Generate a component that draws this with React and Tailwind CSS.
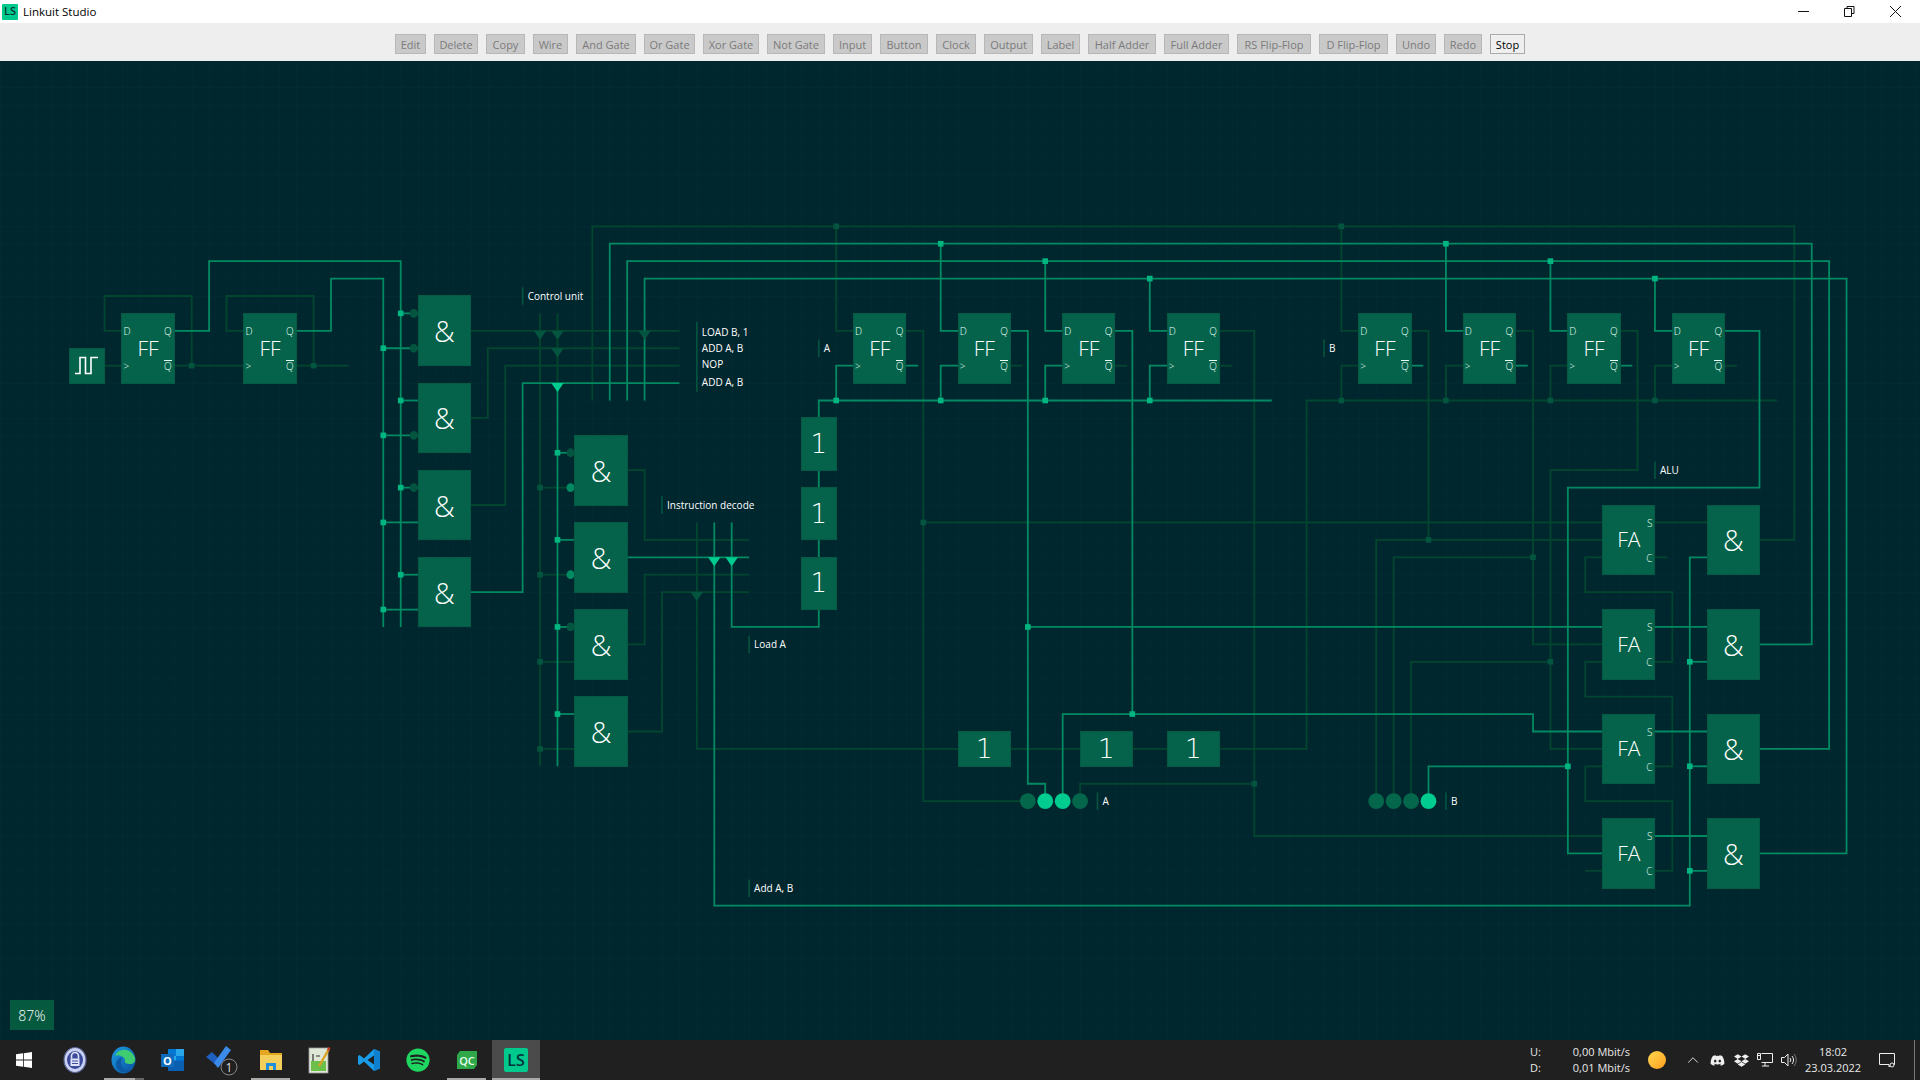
import React from 'react'
import { ChevronUp } from 'lucide-react'
import { FaDiscord, FaDropbox, FaSpotify } from 'react-icons/fa'

// the circuit sits on a 17.42px grid (20 units at 87% zoom), canvas starts at y=61
const U = 17.42
const X = j => 0.04 + U * j
const Y = k => -0.16 + U * k - 61

const ON = '#028a62'
const OFF = '#03462f'
const NODE_DIM = '#04553f'
const BRIGHT = '#00cc8f'

const dimWires = [
  [[6, 21], [7, 21]],
  [[10, 21], [14, 21]],
  [[7, 19], [6, 19], [6, 17], [11, 17], [11, 21]],
  [[14, 19], [13, 19], [13, 17], [18, 17], [18, 21]],
  [[17, 21], [20, 21]],
  [[27, 19], [39, 19]],
  [[27, 24], [28, 24], [28, 20], [39, 20]],
  [[27, 29], [29, 29], [29, 21], [39, 21]],
  [[31, 18], [31, 44]],
  [[32, 18], [32, 22]],
  [[34, 23], [34, 13], [103, 13], [103, 31], [101, 31]],
  [[36, 27], [37, 27], [37, 31], [43, 31]],
  [[36, 37], [37, 37], [37, 33], [43, 33]],
  [[36, 42], [38, 42], [38, 34], [43, 34]],
  [[40, 30], [40, 43], [55, 43]],
  [[58, 43], [62, 43]],
  [[65, 43], [67, 43]],
  [[70, 43], [75, 43], [75, 23], [102, 23]],
  [[31, 28], [33, 28]],
  [[31, 33], [33, 33]],
  [[31, 38], [33, 38]],
  [[31, 43], [33, 43]],
  [[48, 13], [48, 19], [49, 19]],
  [[77, 13], [77, 19], [78, 19]],
  [[77, 23], [77, 21], [78, 21]],
  [[83, 23], [83, 21], [84, 21]],
  [[89, 23], [89, 21], [90, 21]],
  [[95, 23], [95, 21], [96, 21]],
  [[52, 19], [53, 19], [53, 46], [59, 46]],
  [[53, 30], [92, 30]],
  [[70, 19], [72, 19], [72, 48], [92, 48]],
  [[72, 45], [62, 45], [62, 46]],
  [[81, 19], [82, 19], [82, 31]],
  [[79, 46], [79, 31], [92, 31]],
  [[87, 19], [88, 19], [88, 37], [92, 37]],
  [[80, 46], [80, 32], [88, 32]],
  [[93, 19], [94, 19], [94, 27], [89, 27], [89, 43], [92, 43]],
  [[81, 46], [81, 38], [89, 38]],
  [[95, 30], [98, 30]],
  [[95, 50], [96, 50], [96, 46], [91, 46], [91, 44], [92, 44]],
  [[95, 44], [96, 44], [96, 40], [91, 40], [91, 38], [92, 38]],
  [[95, 38], [96, 38], [96, 34], [91, 34], [91, 32], [92, 32]],
  [[95, 32], [95.7, 32]],
  [[91, 50], [92, 50]],
  [[58, 21], [58.7, 21]],
  [[64, 21], [64.7, 21]],
  [[99, 21], [99.7, 21]],
  [[70, 21], [70.7, 21]],
]

const onWires = [
  [[10, 19], [12, 19], [12, 15], [23, 15], [23, 36]],
  [[17, 19], [19, 19], [19, 16], [22, 16], [22, 36]],
  [[23, 18], [24, 18]],
  [[22, 20], [24, 20]],
  [[23, 23], [24, 23]],
  [[22, 25], [24, 25]],
  [[23, 28], [24, 28]],
  [[22, 30], [24, 30]],
  [[23, 33], [24, 33]],
  [[22, 35], [24, 35]],
  [[27, 34], [30, 34], [30, 22], [39, 22]],
  [[32, 22], [32, 44]],
  [[32, 26], [33, 26]],
  [[32, 31], [33, 31]],
  [[32, 36], [33, 36]],
  [[32, 41], [33, 41]],
  [[36, 32], [43, 32]],
  [[35, 23], [35, 14], [104, 14], [104, 37], [101, 37]],
  [[36, 23], [36, 15], [105, 15], [105, 43], [101, 43]],
  [[37, 23], [37, 16], [106, 16], [106, 49], [101, 49]],
  [[41, 30], [41, 52], [97, 52], [97, 32], [98, 32]],
  [[42, 30], [42, 36], [47, 36], [47, 35]],
  [[47, 32], [47, 31]],
  [[47, 28], [47, 27]],
  [[47, 24], [47, 23], [73, 23]],
  [[48, 23], [48, 21], [49, 21]],
  [[54, 23], [54, 21], [55, 21]],
  [[60, 23], [60, 21], [61, 21]],
  [[66, 23], [66, 21], [67, 21]],
  [[54, 14], [54, 19], [55, 19]],
  [[60, 15], [60, 19], [61, 19]],
  [[66, 16], [66, 19], [67, 19]],
  [[83, 14], [83, 19], [84, 19]],
  [[89, 15], [89, 19], [90, 19]],
  [[95, 16], [95, 19], [96, 19]],
  [[58, 19], [59, 19], [59, 45], [60, 45], [60, 46]],
  [[59, 36], [92, 36]],
  [[64, 19], [65, 19], [65, 41]],
  [[61, 46], [61, 41], [88, 41], [88, 42], [92, 42]],
  [[99, 19], [101, 19], [101, 28], [90, 28], [90, 49], [92, 49]],
  [[90, 44], [82, 44], [82, 46]],
  [[95, 36], [98, 36]],
  [[95, 42], [98, 42]],
  [[95, 48], [98, 48]],
  [[97, 38], [98, 38]],
  [[97, 44], [98, 44]],
  [[97, 50], [98, 50]],
  [[52, 21], [52.7, 21]],
  [[81, 21], [81.7, 21]],
  [[87, 21], [87.7, 21]],
  [[93, 21], [93.7, 21]],
]

const onDots = [[23, 18], [22, 20], [23, 23], [22, 25], [23, 28], [22, 30], [23, 33], [22, 35], [32, 26], [32, 31], [32, 36], [32, 41], [54, 14], [60, 15], [66, 16], [83, 14], [89, 15], [95, 16], [48, 23], [54, 23], [60, 23], [66, 23], [59, 36], [65, 41], [90, 44], [97, 38], [97, 44], [97, 50]]
const offDots = [[11, 21], [18, 21], [31, 28], [31, 33], [31, 38], [31, 43], [48, 13], [77, 13], [53, 30], [72, 45], [82, 31], [88, 32], [89, 38], [77, 23], [83, 23], [89, 23], [95, 23]]

const offTriangles = [[31, 19], [32, 19], [32, 20], [37, 19], [40, 34]]
const onTriangles = [[32, 22], [41, 32], [42, 32]]

const bubbles = [
  [23.75, 18, NODE_DIM], [23.75, 20, NODE_DIM], [23.75, 25, NODE_DIM], [23.75, 28, NODE_DIM],
  [32.75, 26, NODE_DIM], [32.75, 36, NODE_DIM], [32.75, 28, ON], [32.75, 33, ON],
]

const leds = [[59, 0], [60, 1], [61, 1], [62, 0], [79, 0], [80, 0], [81, 0], [82, 1]]

const flipFlops = [[7], [14], [49], [55], [61], [67], [78], [84], [90], [96]]
const ands = [[24, 17], [24, 22], [24, 27], [24, 32], [33, 25], [33, 30], [33, 35], [33, 40], [98, 29], [98, 35], [98, 41], [98, 47]]
const adders = [29, 35, 41, 47]
const inverters = [[46, 24, 3], [46, 28, 3], [46, 32, 3], [55, 42, 2], [62, 42, 2], [67, 42, 2]]
const labels = [
  [30, 17, 1, 'Control unit'],
  [47, 20, 1, 'A'],
  [76, 20, 1, 'B'],
  [38, 29, 1, 'Instruction decode'],
  [43, 37, 1, 'Load A'],
  [43, 51, 1, 'Add A, B'],
  [63, 46, 1, 'A'],
  [83, 46, 1, 'B'],
  [95, 27, 1, 'ALU'],
]

const tools = [
  ['Edit', 'w-[31px]'], ['Delete', 'w-[44px]'], ['Copy', 'w-[39px]'], ['Wire', 'w-[35px]'],
  ['And Gate', 'w-[60px]'], ['Or Gate', 'w-[51px]'], ['Xor Gate', 'w-[56px]'], ['Not Gate', 'w-[58px]'],
  ['Input', 'w-[39px]'], ['Button', 'w-[48px]'], ['Clock', 'w-[40px]'], ['Output', 'w-[49px]'],
  ['Label', 'w-[39px]'], ['Half Adder', 'w-[68px]'], ['Full Adder', 'w-[65px]'], ['RS Flip-Flop', 'w-[74px]'],
  ['D Flip-Flop', 'w-[69px]'], ['Undo', 'w-[40px]'], ['Redo', 'w-[38px]'],
]

const pathOf = pts => pts.map((p, i) => `${i ? 'L' : 'M'}${X(p[0])} ${Y(p[1])}`).join(' ')

function Wiring() {
  return (
    <svg className="absolute inset-0 h-full w-full" xmlns="http://www.w3.org/2000/svg">
      <defs>
        <pattern id="grid" x={X(0)} y={Y(0)} width={U} height={U} patternUnits="userSpaceOnUse">
          <path d={`M${U} 0H0V${U}`} fill="none" stroke="#032d36" strokeWidth="1" />
        </pattern>
      </defs>
      <rect width="100%" height="100%" fill="url(#grid)" />
      {dimWires.map((w, i) => <path key={i} d={pathOf(w)} fill="none" stroke={OFF} strokeWidth="1.8" />)}
      {onWires.map((w, i) => <path key={i} d={pathOf(w)} fill="none" stroke={ON} strokeWidth="1.8" />)}
      {offDots.map(([j, k], i) => <rect key={i} x={X(j) - 2.8} y={Y(k) - 2.8} width="5.6" height="5.6" fill={NODE_DIM} />)}
      {onDots.map(([j, k], i) => <rect key={i} x={X(j) - 2.8} y={Y(k) - 2.8} width="5.6" height="5.6" fill="#00b680" />)}
      {offTriangles.map(([j, k], i) => <path key={i} d={`M${X(j) - 6.2} ${Y(k)}h12.4l-6.2 9z`} fill={NODE_DIM} />)}
      {onTriangles.map(([j, k], i) => <path key={i} d={`M${X(j) - 6.2} ${Y(k)}h12.4l-6.2 9z`} fill={BRIGHT} />)}
      {bubbles.map(([j, k, c], i) => <ellipse key={i} cx={X(j)} cy={Y(k)} rx="4" ry="4.4" fill={c} />)}
      {leds.map(([j, lit], i) => <circle key={i} cx={X(j)} cy={Y(46)} r="7.9" fill={lit ? BRIGHT : '#04664a'} />)}
      {/* label ticks */}
      {labels.map(([j, k, h], i) => <path key={i} d={`M${X(j)} ${Y(k) - 8.7}v${U * h}`} stroke={NODE_DIM} strokeWidth="1.6" />)}
      <path d={`M${X(40)} ${Y(18.5)}v${U * 4}`} stroke={NODE_DIM} strokeWidth="1.6" />
    </svg>
  )
}

function Block({ j, k, w, h, children }) {
  return (
    <div
      className="absolute flex items-center justify-center border border-[#045a43] bg-[#04634a] font-light text-white"
      style={{ left: X(j) - 0.5, top: Y(k) - 0.5, width: U * w + 1, height: U * h + 1 }}
    >
      {children}
    </div>
  )
}

function Pin({ row, right, children, className = '' }) {
  return (
    <span
      className={`absolute text-[10px] leading-none text-[#e8fff6] ${right ? 'right-[2px]' : 'left-[1px]'} ${className}`}
      style={{ top: U * row - 5 }}
    >
      {children}
    </span>
  )
}

function FlipFlop({ j }) {
  return (
    <Block j={j} k={18} w={3} h={4}>
      <span className="text-[21px] leading-none">FF</span>
      <Pin row={1}>D</Pin>
      <Pin row={1} right>Q</Pin>
      <Pin row={3}>&gt;</Pin>
      <Pin row={3} right className="-translate-y-px border-t border-[#e8fff6]">Q</Pin>
    </Block>
  )
}

function Adder({ k }) {
  return (
    <Block j={92} k={k} w={3} h={4}>
      <span className="text-[21px] leading-none">FA</span>
      <Pin row={1} right>S</Pin>
      <Pin row={3} right>C</Pin>
    </Block>
  )
}

function Tag({ j, k, children }) {
  return (
    <span
      className="absolute whitespace-nowrap text-[10px] leading-none text-white"
      style={{ left: X(j) + 5, top: Y(k) - 5 }}
    >
      {children}
    </span>
  )
}

function Canvas() {
  return (
    <main className="relative flex-1 overflow-hidden bg-[#00262e]">
      <Wiring />
      <Block j={4} k={20} w={2} h={2}>
        <svg width="26" height="20" viewBox="0 0 26 20" fill="none" stroke="#fff" strokeWidth="1.6">
          <path d="M1 17.5H6V1.5H11.5V17.5H17V1.5H24" />
        </svg>
      </Block>
      {flipFlops.map(([j]) => <FlipFlop key={j} j={j} />)}
      {ands.map(([j, k]) => (
        <Block key={`${j}-${k}`} j={j} k={k} w={3} h={4}>
          <span className="text-[29px] leading-none">&amp;</span>
        </Block>
      ))}
      {adders.map(k => <Adder key={k} k={k} />)}
      {inverters.map(([j, k, h]) => (
        <Block key={`${j}-${k}`} j={j} k={k} w={j === 46 ? 2 : 3} h={h}>
          <span className="font-['DejaVu_Sans',sans-serif] text-[26px] font-extralight leading-none">1</span>
        </Block>
      ))}
      {labels.map(([j, k, , text], i) => <Tag key={i} j={j} k={k}>{text}</Tag>)}
      <Tag j={40} k={19.05}>LOAD B, 1</Tag>
      <Tag j={40} k={19.98}>ADD A, B</Tag>
      <Tag j={40} k={20.93}>NOP</Tag>
      <Tag j={40} k={21.93}>ADD A, B</Tag>
      <div className="absolute bottom-[10px] left-[10px] flex h-[30px] w-[44px] items-center justify-center bg-[#05593f] text-[14px] font-light text-white">
        87%
      </div>
    </main>
  )
}

function TitleBar() {
  return (
    <header className="flex h-[23px] items-center bg-white">
      <div className="ml-[2px] flex h-[16px] w-[16px] items-center justify-center rounded-[1px] bg-[#00c98d] text-[11px] font-semibold text-[#033]">
        LS
      </div>
      <span className="ml-[5px] text-[11.5px] text-black">Linkuit Studio</span>
      <div className="ml-auto flex pr-[2px]">
        <div className="flex h-[20px] w-[45px] items-center justify-center">
          <svg width="11" height="11" viewBox="0 0 11 11" stroke="#111"><path d="M0 5.5H11" /></svg>
        </div>
        <div className="flex h-[20px] w-[46px] items-center justify-center">
          <svg width="11" height="11" viewBox="0 0 11 11" fill="none" stroke="#111"><path d="M.5 2.5h7v8h-7zM3 2.5V.5h7v7H7.5" /></svg>
        </div>
        <div className="flex h-[20px] w-[46px] items-center justify-center">
          <svg width="11" height="11" viewBox="0 0 11 11" stroke="#111"><path d="M0 0L11 11M11 0L0 11" /></svg>
        </div>
      </div>
    </header>
  )
}

function Toolbar() {
  return (
    <nav className="flex h-[38px] items-start justify-center gap-2 bg-[#eeeeee] pt-[11px]">
      {tools.map(([name, width]) => (
        <button key={name} className={`h-[20px] border border-[#b7b7b7] bg-[#c9c9c9] text-center text-[11px] leading-none text-[#7b7b7b] ${width}`}>
          {name}
        </button>
      ))}
      <button className="h-[20px] w-[35px] border border-[#ababab] bg-[#efefef] text-center text-[11px] leading-none text-black">Stop</button>
    </nav>
  )
}

function Slot({ line, children }) {
  return (
    <div className="relative flex h-full w-[49px] items-center justify-center">
      {children}
      {line}
    </div>
  )
}

function Taskbar() {
  const underline = <span className="absolute bottom-0 left-[5px] right-[5px] h-[2px] bg-[#a9a9a9]" />
  return (
    <footer className="flex h-[40px] items-center bg-[#202020] text-white">
      <div className="mr-[2px] flex h-full w-[48px] items-center justify-center">
        <svg width="16" height="16" viewBox="0 0 16 16" fill="#fff">
          <path d="M0 2.3L7 1.3V7.6H0zM7.8 1.2L16 0V7.6H7.8zM0 8.4H7V14.7L0 13.7zM7.8 8.4H16V16L7.8 14.8z" />
        </svg>
      </div>
      <Slot>
        <svg width="24" height="26" viewBox="0 0 24 26">
          <ellipse cx="12" cy="13" rx="11" ry="12.5" fill="#c9d2f2" stroke="#59628f" strokeWidth="1.2" />
          <ellipse cx="12" cy="13" rx="8" ry="9" fill="#3d4a9c" />
          <path d="M8.5 11.5V9a3.5 3.5 0 0 1 7 0v2.5" fill="none" stroke="#dfe4fa" strokeWidth="1.6" />
          <rect x="7.5" y="11.5" width="9" height="7.5" fill="#dfe4fa" />
          <path d="M9 14h6M9 16.5h6" stroke="#3d4a9c" strokeWidth="1" />
        </svg>
      </Slot>
      <Slot line={
        <>
          <span className="absolute bottom-0 left-[5px] h-[2px] w-[31px] bg-[#a9a9a9]" />
          <span className="absolute bottom-0 left-[36px] h-[2px] w-[9px] bg-[#666]" />
        </>
      }>
        <svg width="25" height="28" viewBox="0 0 25 28">
          <defs>
            <linearGradient id="edgeG" x1="0" y1="0" x2="1" y2="1">
              <stop offset="0" stopColor="#1b9de2" />
              <stop offset="1" stopColor="#0b4f9e" />
            </linearGradient>
          </defs>
          <ellipse cx="12.5" cy="14" rx="12" ry="13.5" fill="url(#edgeG)" />
          <path d="M4 10C7 2 20 1 24 12c1 4-2 6-5 6-3.5 0-6-1-5-3 1-4-7-7-10-5z" fill="#3ecb72" />
          <path d="M10 17c0 5 5 8 10 7-5 5-15 2-15-6 0-3 3-7 7-7-2 1-2 4-2 6z" fill="#0c59a4" />
        </svg>
      </Slot>
      <Slot>
        <svg width="24" height="24" viewBox="0 0 24 24">
          <rect x="7" y="1" width="16" height="22" fill="#28a8ea" />
          <rect x="7" y="1" width="8" height="7" fill="#0078d4" />
          <rect x="15" y="8" width="8" height="7" fill="#0078d4" />
          <path d="M7 12L23 13V23H7z" fill="#0a5fb0" />
          <rect x="0" y="6" width="13" height="13" fill="#0f6cbd" />
          <text x="6.5" y="16.5" textAnchor="middle" fontSize="11" fontWeight="700" fill="#fff">O</text>
        </svg>
      </Slot>
      <Slot>
        <svg width="34" height="32" viewBox="0 0 34 32">
          <path d="M1 13L7 8L14 15L11 21z" fill="#1f5fbf" />
          <path d="M9 19L21 2L26 6L13 24z" fill="#3a8bea" />
          <circle cx="24" cy="23" r="8" fill="#202020" stroke="#888" strokeWidth="1" />
          <text x="24" y="27.5" textAnchor="middle" fontSize="12" fill="#ddd">1</text>
        </svg>
      </Slot>
      <Slot line={underline}>
        <svg width="22" height="20" viewBox="0 0 22 20">
          <path d="M0 0H8L10 3H22V6H0z" fill="#e3a81f" />
          <rect y="5" width="22" height="15" fill="#f5cf5c" />
          <rect x="6" y="13" width="10" height="7" fill="#1d8fdc" />
          <rect x="9" y="16" width="4" height="4" fill="#f5cf5c" />
        </svg>
      </Slot>
      <Slot>
        <svg width="24" height="28" viewBox="0 0 24 28">
          <rect x="1" y="2" width="19" height="25" fill="#dfe8d7" stroke="#999" strokeWidth="0.8" />
          <rect x="3" y="15" width="15" height="10" fill="#6cc04a" />
          <path d="M5 8v7M8 10h4" stroke="#333" strokeWidth="1.2" />
          <path d="M11 20L21 3" stroke="#d9a326" strokeWidth="2.4" />
          <path d="M20 4.5L21.6 1.5" stroke="#c0392b" strokeWidth="2.4" />
        </svg>
      </Slot>
      <Slot>
        <svg width="24" height="28" viewBox="0 0 24 24">
          <path d="M17 1L7 10.5L2.6 7L1 7.9V16.1L2.6 17L7 13.5L17 23L23 20.5V3.5Z" fill="#1a9be8" />
          <path d="M17 7.5L10.5 12L17 16.5Z" fill="#202020" />
          <path d="M17 1L23 3.5V20.5L17 23Z" fill="#0f7fd0" />
        </svg>
      </Slot>
      <Slot><FaSpotify size={24} color="#1ed760" /></Slot>
      <Slot line={underline}>
        <svg width="20" height="18" viewBox="0 0 20 18">
          <path d="M3 0H20V14L17 18H0V4z" fill="#2fa84a" />
          <text x="10" y="13.5" textAnchor="middle" fontSize="11" fontWeight="600" fill="#e8fff0">QC</text>
        </svg>
      </Slot>
      <div className="relative ml-px flex h-full w-[48px] items-center justify-center bg-[#4b4b4b]">
        <div className="flex h-[24px] w-[24px] items-center justify-center rounded-[2px] bg-[#00c98d] text-[16px] font-semibold leading-none text-[#03333a]">LS</div>
        <span className="absolute bottom-0 left-0 right-0 h-[2px] bg-[#a9a9a9]" />
      </div>

      <div className="ml-auto flex h-full items-center text-[11px] leading-[16px] text-[#e8e8e8]">
        <div className="flex w-[101px] justify-between pr-px">
          <div><div>U:</div><div>D:</div></div>
          <div className="text-right"><div>0,00 Mbit/s</div><div>0,01 Mbit/s</div></div>
        </div>
        <div className="ml-[17px] mr-[15px] h-[18px] w-[18px] rounded-full bg-gradient-to-br from-[#ffd84d] to-[#ff9d1a]" />
        <div className="flex w-[24px] justify-center"><ChevronUp size={18} strokeWidth={1.2} color="#eee" /></div>
        <div className="flex w-[24px] justify-center"><FaDiscord size={15} color="#eee" /></div>
        <div className="flex w-[24px] justify-center"><FaDropbox size={15} color="#eee" /></div>
        <div className="flex w-[24px] justify-center">
          <svg width="16" height="14" viewBox="0 0 16 14" fill="none" stroke="#eee">
            <path d="M4.5 .5H15.5V9.5H4.5M8 9.5V13M5 13H12M.5 2.5H3.5M.5 .5H3.5V6.5H.5z" />
          </svg>
        </div>
        <div className="flex w-[24px] justify-center">
          <svg width="16" height="14" viewBox="0 0 16 14" fill="none" stroke="#eee">
            <path d="M.5 4.5H3.5L7 1V13L3.5 9.5H.5z" />
            <path d="M9 5a3 3 0 0 1 0 4M11 3a6 6 0 0 1 0 8" />
            <path d="M13 1a9 9 0 0 1 0 12" stroke="#777" />
          </svg>
        </div>
        <div className="w-[64px] text-center">
          <div>18:02</div>
          <div>23.03.2022</div>
        </div>
        <div className="flex w-[44px] justify-center">
          <svg width="16" height="15" viewBox="0 0 16 15" fill="none" stroke="#eee">
            <path d="M.5 .5H15.5V11.5H12L10 14V11.5H.5z" />
            <circle cx="13" cy="12" r="2" fill="#202020" />
          </svg>
        </div>
        <div className="flex h-full w-[11px] justify-center"><span className="h-full w-px bg-[#777]" /></div>
      </div>
    </footer>
  )
}

export default function App() {
  return (
    <div className="flex h-screen w-screen flex-col overflow-hidden font-['Open_Sans',sans-serif]">
      <TitleBar />
      <Toolbar />
      <Canvas />
      <Taskbar />
    </div>
  )
}
